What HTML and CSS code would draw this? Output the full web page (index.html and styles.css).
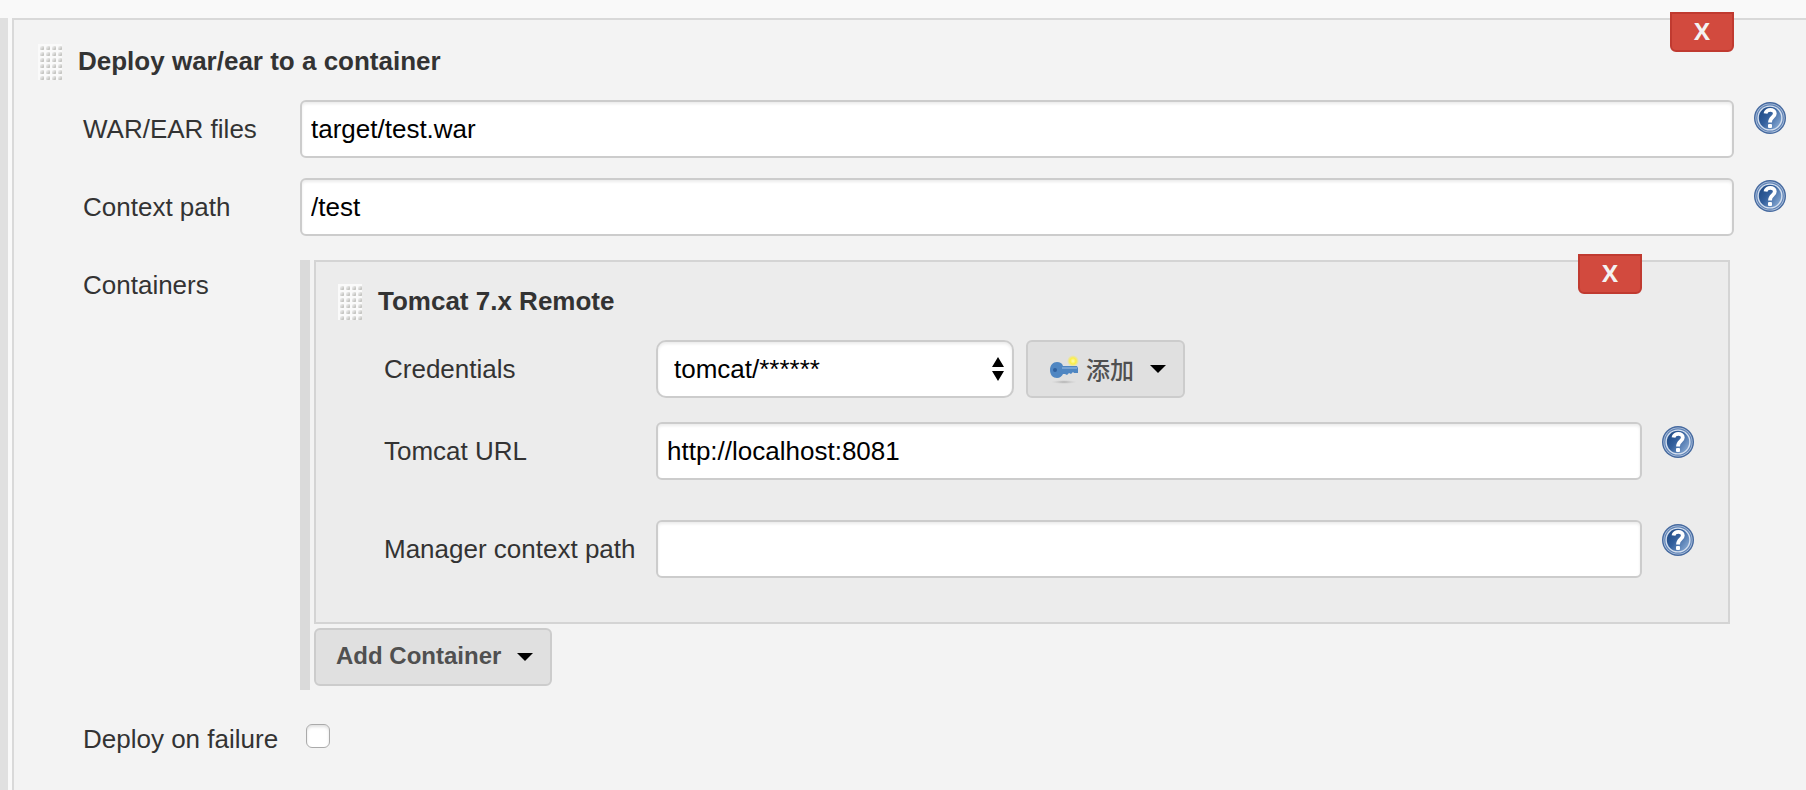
FILE: index.html
```html
<!DOCTYPE html>
<html lang="en">
<head>
    <meta charset="UTF-8">
    <meta name="viewport" content="width=device-width, initial-scale=1.0">
    <title>Deploy war/ear to a container</title>
    <link rel="stylesheet" href="styles.css">
</head>
<body>
    <!-- Shared icons -->
    <svg class="sprite" aria-hidden="true">
        <defs>
            <linearGradient id="help-fill" x1="0" y1="0.2" x2="1" y2="0.9">
                <stop offset="0" stop-color="#1f4a85"/>
                <stop offset="0.4" stop-color="#34609d"/>
                <stop offset="1" stop-color="#8fb0d8"/>
            </linearGradient>
            <linearGradient id="dot-fill" x1="0" y1="0" x2="1" y2="1">
                <stop offset="0.1" stop-color="#f4f4f4"/>
                <stop offset="1" stop-color="#b4b4b0"/>
            </linearGradient>
            <pattern id="dots" width="6" height="6" patternUnits="userSpaceOnUse">
                <rect width="6" height="6" fill="#fafafa"/>
                <rect x="2" y="2" width="4" height="4" rx="1" fill="url(#dot-fill)"/>
            </pattern>
            <radialGradient id="glow">
                <stop offset="0" stop-color="#fffcae"/>
                <stop offset="0.5" stop-color="#fbee48"/>
                <stop offset="1" stop-color="#f6ea60" stop-opacity="0"/>
            </radialGradient>
            <radialGradient id="key-shadow">
                <stop offset="0" stop-color="#aaa"/>
                <stop offset="1" stop-color="#ccc" stop-opacity="0"/>
            </radialGradient>
        </defs>
        <symbol id="icon-help" viewBox="0 0 32 32">
            <circle cx="16" cy="16" r="16" fill="#45699f"/>
            <circle cx="16" cy="16" r="14.6" fill="#b3c5de"/>
            <circle cx="16" cy="16" r="13.8" fill="#5f83b6"/>
            <circle cx="16" cy="16" r="12.6" fill="#d5e0ef"/>
            <circle cx="16" cy="16" r="11.2" fill="url(#help-fill)"/>
            <path d="M11.500 11.500C12 6.800 20.800 6.500 20.800 11.500C20.800 15.500 16 15 16 20.500" fill="none" stroke="#fff" stroke-width="3.800"/>
            <rect x="14" y="22" width="4" height="4" rx="1" fill="#fff"/>
        </symbol>
        <symbol id="icon-handle" viewBox="0 0 24 36">
            <rect width="24" height="36" fill="url(#dots)"/>
        </symbol>
        <symbol id="icon-arrow" viewBox="0 0 16 8">
            <path d="M0 0h16L8 8z"/>
        </symbol>
    </svg>

    <div class="rail"></div>

    <form class="step">
        <button type="button" class="delete step-delete">X</button>
        <div class="heading">
            <svg class="handle"><use href="#icon-handle"/></svg>
            <h2>Deploy war/ear to a container</h2>
        </div>

        <div class="row">
            <label for="war-files">WAR/EAR files</label>
            <input type="text" id="war-files" value="target/test.war">
            <a class="help" href="#war-files" aria-label="Help"><svg><use href="#icon-help"/></svg></a>
        </div>
        <div class="row">
            <label for="context-path">Context path</label>
            <input type="text" id="context-path" value="/test">
            <a class="help" href="#context-path" aria-label="Help"><svg><use href="#icon-help"/></svg></a>
        </div>

        <div class="row containers-row">
            <span class="row-title">Containers</span>
            <div class="containers">
                <div class="container">
                    <button type="button" class="delete container-delete">X</button>
                    <div class="heading">
                        <svg class="handle"><use href="#icon-handle"/></svg>
                        <h2>Tomcat 7.x Remote</h2>
                    </div>
                    <div class="row">
                        <label for="credentials">Credentials</label>
                        <div class="credentials">
                            <div class="select">
                                <select id="credentials">
                                    <option>tomcat/******</option>
                                </select>
                                <svg class="select-arrows" viewBox="0 0 12 24"><path d="M0 10L6 0l6 10zM0 14h12L6 24z"/></svg>
                            </div>
                            <button type="button" class="menu-button">
                                <svg class="key" viewBox="0 0 32 32">
                                    <ellipse cx="16" cy="30" rx="13" ry="2" fill="url(#key-shadow)"/>
                                    <circle cx="25" cy="9" r="6" fill="url(#glow)"/>
                                    <path d="M9 10c3 0 5 1 6 4h14l1 2v5h-4l-1-1-2 2-2-1-2 2-2-1h-2c-1 2-3 4-6 4-4 0-7-3-7-8s3-8 7-8z" fill="#4f86c2"/>
                                    <path d="M14 15h15v2H14z" fill="#78a3d4"/>
                                    <circle cx="7" cy="18" r="2" fill="#2f609e"/>
                                </svg>
                                <span>添加</span>
                                <svg class="arrow"><use href="#icon-arrow"/></svg>
                            </button>
                        </div>
                    </div>
                    <div class="row">
                        <label for="tomcat-url">Tomcat URL</label>
                        <input type="text" id="tomcat-url" value="http://localhost:8081">
                        <a class="help" href="#tomcat-url" aria-label="Help"><svg><use href="#icon-help"/></svg></a>
                    </div>
                    <div class="row manager-row">
                        <label for="manager-path">Manager context path</label>
                        <input type="text" id="manager-path">
                        <a class="help" href="#manager-path" aria-label="Help"><svg><use href="#icon-help"/></svg></a>
                    </div>
                </div>
                <button type="button" class="menu-button">
                    <span>Add Container</span>
                    <svg class="arrow"><use href="#icon-arrow"/></svg>
                </button>
            </div>
        </div>

        <div class="row failure-row">
            <label for="on-failure">Deploy on failure</label>
            <input type="checkbox" id="on-failure">
        </div>
    </form>
</body>
</html>
```
FILE: styles.css
```css
* {
    box-sizing: border-box;
}
body {
    font-family: "Liberation Sans", "Noto Sans CJK SC", sans-serif;
    font-size: 26px;
    line-height: 30px;
    color: #333;
    background: #f9f9f9;
    display: flex;
    gap: 4px;
    min-height: 100vh;
    margin: 0;
    padding-top: 18px;
}
svg {
    display: block;
}
.sprite {
    position: absolute;
    width: 0;
    height: 0;
}
.rail {
    width: 8px;
    background: #e0e0e0;
}
.step {
    position: relative;
    flex: 1;
    padding: 24px 0 24px 24px;
    border-top: 2px solid #d9d9d9;
    border-left: 2px solid #d9d9d9;
    background: #f3f3f3;
}
.heading {
    display: flex;
    gap: 16px;
    margin-bottom: 20px;
}
.handle {
    width: 24px;
    height: 36px;
}
h2 {
    margin: 0;
    font-size: 26px;
    line-height: 34px;
}
.row {
    display: grid;
    grid-template-columns: 217px 1fr 72px;
    align-items: center;
    margin: 0 0 20px 45px;
}
input[type="text"], select {
    width: 100%;
    height: 58px;
    padding: 0 9px;
    border: 2px solid #ccc;
    border-radius: 6px;
    background: #fff;
    box-shadow: inset 0 2px 3px rgba(0, 0, 0, 0.08);
    color: #000;
    font-family: inherit;
    font-size: 26px;
}
.help {
    align-self: start;
    margin: 2px 0 0 20px;
}
.help svg {
    width: 32px;
    height: 32px;
}
.delete {
    position: absolute;
    top: -8px;
    width: 64px;
    height: 40px;
    padding: 0 0 2px;
    border: 2px solid #c03a30;
    border-radius: 0 0 6px 6px;
    background: #d24a3e;
    color: #f3f3f3;
    font-family: "Open Sans", sans-serif;
    font-size: 24px;
    font-weight: bold;
    line-height: 32px;
    cursor: pointer;
}
.step-delete {
    right: 72px;
}
.container-delete {
    right: 86px;
}

/* Containers */
.containers-row {
    align-items: start;
    margin-top: 24px;
    margin-bottom: 34px;
}
.row-title {
    padding-top: 10px;
}
.containers {
    margin-right: 4px;
    padding: 0 0 4px 4px;
    border-left: 10px solid #dadada;
}
.container {
    position: relative;
    margin-bottom: 4px;
    padding: 22px 0 44px 22px;
    border: 2px solid #d4d4d4;
    background: #ececec;
}
.container .row {
    grid-template-columns: 272px 1fr 86px;
    margin: 0 0 24px 46px;
}
.container .help {
    margin-top: 4px;
}
.container .manager-row {
    margin-top: 40px;
    margin-bottom: 0;
}
.credentials {
    display: flex;
    gap: 12px;
}
.select {
    position: relative;
    width: 358px;
}
select {
    appearance: none;
    padding: 0 16px;
    border-radius: 10px;
}
.select-arrows {
    position: absolute;
    top: 17px;
    right: 10px;
    width: 12px;
    height: 24px;
    pointer-events: none;
}
.menu-button {
    display: flex;
    align-items: center;
    height: 58px;
    padding: 0 17px 2px 20px;
    border: 2px solid #ccc;
    border-radius: 6px;
    background: #e0e0e0;
    color: #505050;
    font-family: inherit;
    font-size: 24px;
    font-weight: bold;
    cursor: pointer;
}
.credentials .menu-button {
    font-weight: 500;
}
.key {
    width: 32px;
    height: 32px;
    margin-right: 6px;
}
.arrow {
    width: 16px;
    height: 8px;
    margin: 2px 0 0 16px;
    fill: #000;
}

.failure-row {
    align-items: start;
    margin-bottom: 0;
}
input[type="checkbox"] {
    appearance: none;
    width: 24px;
    height: 24px;
    margin: 0 0 0 6px;
    border: 1px solid #aaa;
    border-radius: 6px;
    background: #fff;
    box-shadow: inset 0 2px 3px rgba(0, 0, 0, 0.12);
}
```
